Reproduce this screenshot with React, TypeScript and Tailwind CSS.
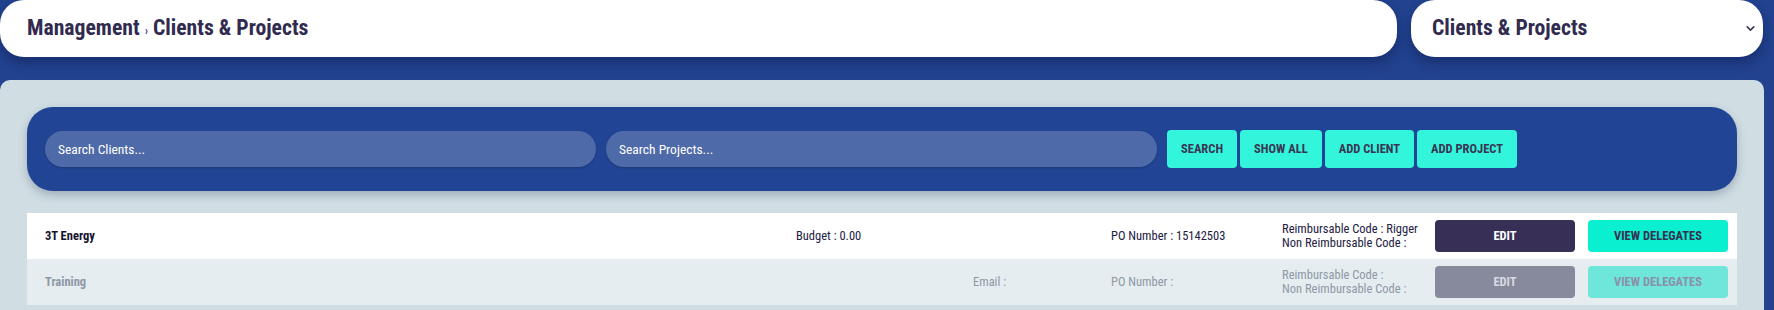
import { ChevronDown } from 'lucide-react'

const font = "font-['Roboto_Condensed','Liberation_Sans_Narrow','DejaVu_Sans_Condensed',Roboto,sans-serif]"

type Row = {
  name: string
  budget?: string
  email?: string
  po: string
  reimb: string
  nonReimb: string
  muted?: boolean
}

const rows: Row[] = [
  {
    name: '3T Energy',
    budget: 'Budget : 0.00',
    po: 'PO Number : 15142503',
    reimb: 'Reimbursable Code : Rigger',
    nonReimb: 'Non Reimbursable Code :',
  },
  {
    name: 'Training',
    email: 'Email :',
    po: 'PO Number :',
    reimb: 'Reimbursable Code :',
    nonReimb: 'Non Reimbursable Code :',
    muted: true,
  },
]

function ActionButton({ label }: { label: string }) {
  return (
    <button
      type="button"
      className="h-[38px] rounded-[4px] bg-[#33f5dc] px-[14px] text-[12.5px] font-bold uppercase text-[#3a3553]"
    >
      {label}
    </button>
  )
}

function ListRow({ row }: { row: Row }) {
  const text = row.muted ? 'text-[#8e98a6]' : 'text-[#23203f]'
  return (
    <div
      className={`grid h-[46px] grid-cols-[751px_177px_138px_171px_153px_153px_140px] items-center pl-[18px] pr-[9px] text-[12.5px] ${
        row.muted ? 'bg-[#e5edf0]' : 'bg-white'
      } ${text}`}
    >
      <div className={row.muted ? 'font-bold' : 'font-bold text-[#14122e]'}>{row.name}</div>
      <div>{row.budget}</div>
      <div>{row.email}</div>
      <div>{row.po}</div>
      <div className="leading-[14px]">
        <div>{row.reimb}</div>
        <div>{row.nonReimb}</div>
      </div>
      <div className="pr-[13px]">
        <button
          type="button"
          className={`h-[32px] w-full rounded-[4px] text-[12.5px] font-bold uppercase ${
            row.muted ? 'bg-[#868a9c] text-[#d7dae2]' : 'bg-[#372f55] text-white'
          }`}
        >
          Edit
        </button>
      </div>
      <button
        type="button"
        className={`h-[32px] w-full rounded-[4px] text-[12.5px] font-bold uppercase ${
          row.muted ? 'bg-[#6ee6da] text-[#8b91a6]' : 'bg-[#0aefd0] text-[#35304f]'
        }`}
      >
        View Delegates
      </button>
    </div>
  )
}

export default function App() {
  return (
    <div className={`min-h-[310px] overflow-hidden bg-[#22428f] ${font}`}>
      <div className="flex gap-[14px] pr-[11px]">
        <div className="flex h-[57px] flex-1 items-center rounded-[24px] bg-white pl-[27px] shadow-[0_6px_12px_rgba(10,25,70,0.45)]">
          <h1 className="text-[21.7px] font-bold text-[#302b4f]">
            Management <span className="text-[12px] text-[#3a4aa6]">›</span> Clients &amp; Projects
          </h1>
        </div>
        <div className="flex h-[57px] w-[352px] items-center justify-between rounded-[24px] bg-white pl-[21px] pr-[6px] shadow-[0_6px_12px_rgba(10,25,70,0.45)]">
          <span className="text-[21.7px] font-bold text-[#302b4f]">Clients &amp; Projects</span>
          <ChevronDown size={13} strokeWidth={3} className="text-[#3d3a5c]" />
        </div>
      </div>

      <div className="mr-[10px] mt-[23px] rounded-t-[10px] bg-[#d0dee3] px-[27px] pb-[10px] pt-[27px]">
        <div className="flex h-[84px] items-center rounded-[26px] bg-[#224494] pl-[18px] shadow-[0_4px_10px_rgba(40,60,90,0.3)]">
          <input
            placeholder="Search Clients..."
            className="h-[36px] w-[551px] rounded-full bg-[#4e6aa9] px-[13px] text-[13.5px] text-white shadow-[0_1px_2px_rgba(0,0,0,0.2)] outline-none placeholder:text-white"
          />
          <input
            placeholder="Search Projects..."
            className="ml-[10px] h-[36px] w-[551px] rounded-full bg-[#4e6aa9] px-[13px] text-[13.5px] text-white shadow-[0_1px_2px_rgba(0,0,0,0.2)] outline-none placeholder:text-white"
          />
          <div className="ml-[10px] flex gap-[3px]">
            <ActionButton label="Search" />
            <ActionButton label="Show All" />
            <ActionButton label="Add Client" />
            <ActionButton label="Add Project" />
          </div>
        </div>

        <div className="mt-[22px]">
          {rows.map((row) => (
            <ListRow key={row.name} row={row} />
          ))}
        </div>
      </div>
    </div>
  )
}
